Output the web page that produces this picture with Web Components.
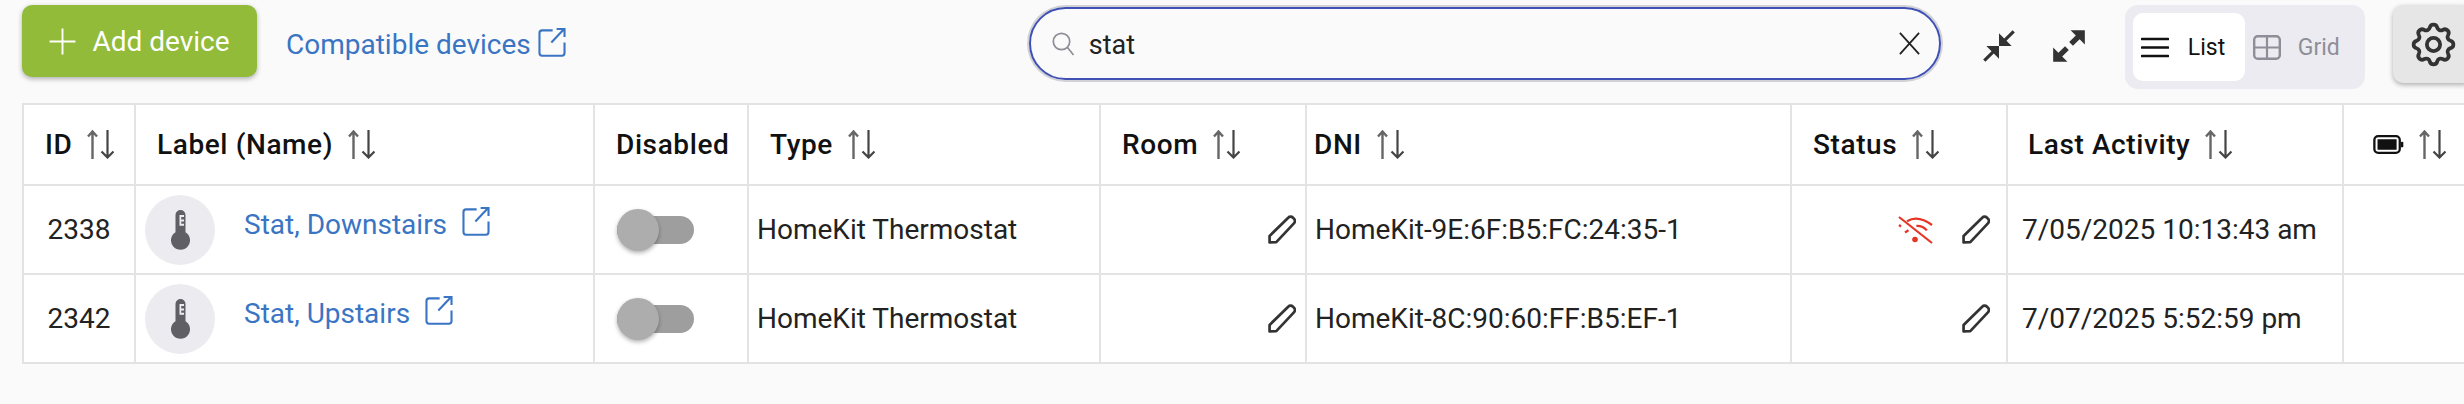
<!DOCTYPE html>
<html>
<head>
<meta charset="utf-8">
<title>Devices</title>
<style>
  html, body { margin: 0; background: #fafafa; overflow: hidden; }
  body { width: 2464px; height: 404px; font-family: Roboto, "Liberation Sans", sans-serif; color: #222; }
</style>
</head>
<body>
<device-toolbar></device-toolbar>
<device-table></device-table>

<script>
// icon paths, on a 24 box unless BOXES says otherwise
const ICONS = {
  plus: '<path d="M12 .5v23M.5 12h23" fill="none" stroke="currentColor" stroke-width="1.7"/>',
  external: '<path d="M13 2.8H5a2 2 0 0 0-2 2V20a2 2 0 0 0 2 2h15a2 2 0 0 0 2-2v-8" fill="none" stroke="currentColor" stroke-width="1.6"/><path d="M12 12 21.5 2M16 1.8h6v6" fill="none" stroke="currentColor" stroke-width="1.6"/>',
  search: '<circle cx="10.5" cy="10" r="8.2" fill="none" stroke="currentColor" stroke-width="1.7"/><path d="m16.5 16 6 7.5" fill="none" stroke="currentColor" stroke-width="1.7"/>',
  close: '<path d="M2 1l20 22M22 1 2 23" fill="none" stroke="currentColor" stroke-width="1.9"/>',
  compress: '<path d="M22 3.41l-5.29 5.29L20 12h-8V4l3.29 3.29L20.59 2 22 3.41zM3.41 22l5.29-5.29L12 20v-8H4l3.29 3.29L2 20.59 3.41 22z" fill="currentColor"/>',
  expand: '<path d="M22 2v9l-3.3-3.3-4.2 4.2-2.4-2.4 4.2-4.2L13 2zM2 22v-9l3.3 3.3 4.2-4.2 2.4 2.4-4.2 4.2L11 22z" fill="currentColor"/>',
  list: '<path d="M1 2h26M1 10.5h26M1 19h26" fill="none" stroke="currentColor" stroke-width="2.6" stroke-linecap="round"/>',
  grid: '<rect x="1.2" y="1.2" width="25.6" height="22.6" rx="3.5" fill="none" stroke="currentColor" stroke-width="2.4"/><path d="M14 1v23M1 12.5h26" fill="none" stroke="currentColor" stroke-width="2.2"/>',
  gear: '<path d="M10.325 4.317c.426-1.756 2.924-1.756 3.35 0a1.724 1.724 0 0 0 2.573 1.066c1.543-.94 3.31.826 2.37 2.37a1.724 1.724 0 0 0 1.065 2.572c1.756.426 1.756 2.924 0 3.35a1.724 1.724 0 0 0-1.066 2.573c.94 1.543-.826 3.31-2.37 2.37a1.724 1.724 0 0 0-2.572 1.065c-.426 1.756-2.924 1.756-3.35 0a1.724 1.724 0 0 0-2.573-1.066c-1.543.94-3.31-.826-2.37-2.37a1.724 1.724 0 0 0-1.065-2.572c-1.756-.426-1.756-2.924 0-3.35a1.724 1.724 0 0 0 1.066-2.573c-.94-1.543.826-3.31 2.37-2.37 1 .608 2.296.07 2.572-1.065z" fill="none" stroke="currentColor" stroke-width="1.7"/><circle cx="12" cy="12" r="3" fill="none" stroke="currentColor" stroke-width="1.7"/>',
  sort: '<path d="M5.5 29V1.5M1 6.5l4.5-5 4.5 5" fill="none" stroke="#666" stroke-width="2.4"/><path d="M20.5 0v27.5M14.5 21.5l6 6 6-6" fill="none" stroke="#444" stroke-width="2.2"/>',
  battery: '<rect x="1.2" y="2.2" width="26.6" height="17.6" rx="4" fill="none" stroke="currentColor" stroke-width="2.4"/><rect x="4.5" y="5.5" width="20" height="11" fill="currentColor"/><rect x="29" y="8" width="2.5" height="6" rx="1" fill="currentColor"/>',
  thermometer: '<path d="M4.5 5a5 5 0 0 1 10 0v17.2a9.5 9.5 0 1 1-10 0z" fill="currentColor"/><path d="M8.5 5h4.5v2h-2.8v2.4H13v2h-2.8v2.4H13v2H8.5z" fill="#ecebf0"/>',
  pencil: '<path d="M1.5 26.5v-6.3L19.5 2.6a3.2 3.2 0 0 1 4.6 0l.9.9a3.2 3.2 0 0 1 0 4.6L8 26.2z" fill="none" stroke="currentColor" stroke-width="2.6" stroke-linejoin="round"/>',
  wifiOff: '<path d="M1 1l33 26" fill="none" stroke="currentColor" stroke-width="2.2"/><path d="M9 5.2C16 1 25 2.2 34 9M18.4 9.8c4-.2 8 1.6 10.5 4.6" fill="none" stroke="currentColor" stroke-width="2.2"/><path d="M1 9l2 1.5M7 16.5l3.5-2.2" fill="none" stroke="currentColor" stroke-width="2.2"/><circle cx="17" cy="23.5" r="2.8" fill="currentColor"/>'
};
const BOXES = {
  sort: '0 0 27 29', battery: '0 0 32 22', thermometer: '0 0 19 40', pencil: '0 0 27 28', wifiOff: '0 0 35 28',
  list: '0 0 28 21', grid: '0 0 28 25', external: '2 1 21 22', search: '1 .5 23 24'
};

class AppIcon extends HTMLElement {
  connectedCallback() {
    const name = this.getAttribute('name');
    this.attachShadow({ mode: 'open' });
    this.shadowRoot.innerHTML = `
      <style>
        :host { display: inline-flex; flex: none; }
        svg { display: block; width: 100%; height: 100%; }
      </style>
      <svg viewBox="${BOXES[name] || '0 0 24 24'}">${ICONS[name]}</svg>
    `;
  }
}
customElements.define('app-icon', AppIcon);

class SearchBox extends HTMLElement {
  connectedCallback() {
    this.attachShadow({ mode: 'open' });
    this.shadowRoot.innerHTML = `
      <style>
        :host {
          display: flex;
          align-items: center;
          box-sizing: border-box;
          width: 912px;
          height: 73px;
          padding: 0 18px 0 21px;
          border: 2px solid #3f51b5;
          border-radius: 37px;
          box-shadow: 0 0 0 2px #d2d2d6;
          font-size: 27px;
          color: #222;
        }
        .glass { width: 23px; height: 24px; color: #8e8e98; margin-right: 14px; }
        span { flex: 1; margin-top: 2px; }
        .clear { width: 23px; height: 23px; color: #222; }
      </style>
      <app-icon class="glass" name="search"></app-icon>
      <span>stat</span>
      <app-icon class="clear" name="close"></app-icon>
    `;
  }
}
customElements.define('search-box', SearchBox);

class ViewToggle extends HTMLElement {
  connectedCallback() {
    this.attachShadow({ mode: 'open' });
    this.shadowRoot.innerHTML = `
      <style>
        :host {
          display: flex;
          align-items: stretch;
          box-sizing: border-box;
          width: 240px;
          height: 84px;
          padding: 8px;
          border-radius: 13px;
          background: #ecebf1;
          font-size: 23px;
        }
        .opt { display: flex; align-items: center; gap: 19px; padding: 0 8px; border-radius: 10px; box-sizing: border-box; }
        .on { width: 112px; background: #fff; color: #111; }
        .off { color: #8e8e98; gap: 17px; }
        .on app-icon { width: 28px; height: 21px; }
        .off app-icon { width: 28px; height: 25px; }
      </style>
      <div class="opt on"><app-icon name="list"></app-icon>List</div>
      <div class="opt off"><app-icon name="grid"></app-icon>Grid</div>
    `;
  }
}
customElements.define('view-toggle', ViewToggle);

class DeviceToolbar extends HTMLElement {
  connectedCallback() {
    this.attachShadow({ mode: 'open' });
    this.shadowRoot.innerHTML = `
      <style>
        :host {
          display: flex;
          align-items: flex-start;
          box-sizing: border-box;
          height: 103px;
          padding: 5px 0 0 22px;
          width: 2520px;
        }
        .add {
          display: flex;
          align-items: center;
          justify-content: center;
          gap: 16px;
          width: 235px;
          height: 72px;
          border-radius: 10px;
          background: #91bb38;
          color: #fff;
          font-size: 28px;
          box-shadow: 0 2px 5px rgba(0,0,0,0.3);
        }
        .add app-icon { width: 27px; height: 27px; }
        .compat {
          display: flex;
          align-items: flex-start;
          gap: 7px;
          margin: 23px 0 0 29px;
          color: #3a75c4;
          font-size: 28px;
        }
        .compat app-icon { width: 28px; height: 29px; margin-top: 0; }
        search-box { margin: 2px 0 0 463px; }
        .zoom { display: flex; gap: 32px; margin: 22px 0 0 39px; color: #333; }
        .zoom app-icon { width: 38px; height: 38px; }
        view-toggle { margin-left: 37px; }
        .settings {
          display: flex;
          align-items: center;
          box-sizing: border-box;
          width: 80px;
          height: 78px;
          margin-left: 28px;
          padding-left: 14px;
          border-radius: 10px;
          background: #e6e6e6;
          box-shadow: 0 2px 5px rgba(0,0,0,0.3);
          color: #333;
        }
        .settings app-icon { width: 53px; height: 53px; flex: none; }
      </style>
      <div class="add"><app-icon name="plus"></app-icon>Add device</div>
      <div class="compat">Compatible devices<app-icon name="external"></app-icon></div>
      <search-box></search-box>
      <div class="zoom"><app-icon name="compress"></app-icon><app-icon name="expand"></app-icon></div>
      <view-toggle></view-toggle>
      <div class="settings"><app-icon name="gear"></app-icon></div>
    `;
  }
}
customElements.define('device-toolbar', DeviceToolbar);

const DEVICES = [
  { id: 2338, name: 'Stat, Downstairs', dni: 'HomeKit-9E:6F:B5:FC:24:35-1', offline: true, last: '7/05/2025 10:13:43 am' },
  { id: 2342, name: 'Stat, Upstairs', dni: 'HomeKit-8C:90:60:FF:B5:EF-1', offline: false, last: '7/07/2025 5:52:59 pm' }
];

class DeviceTable extends HTMLElement {
  connectedCallback() {
    const sort = '<app-icon class="sort" name="sort"></app-icon>';
    const rows = DEVICES.map(d => `
      <tr>
        <td class="id">${d.id}</td>
        <td>
          <div class="label">
            <div class="avatar"><app-icon name="thermometer"></app-icon></div>
            <a>${d.name}</a>
            <app-icon class="ext" name="external"></app-icon>
          </div>
        </td>
        <td><div class="switch"><i></i></div></td>
        <td>HomeKit Thermostat</td>
        <td><div class="edit"><app-icon class="pen" name="pencil"></app-icon></div></td>
        <td class="dni">${d.dni}</td>
        <td>
          <div class="edit status">
            ${d.offline ? '<app-icon class="wifi" name="wifiOff"></app-icon>' : ''}
            <app-icon class="pen" name="pencil"></app-icon>
          </div>
        </td>
        <td class="last">${d.last}</td>
        <td></td>
      </tr>`).join('');
    this.attachShadow({ mode: 'open' });
    this.shadowRoot.innerHTML = `
      <style>
        :host { display: block; margin-left: 22px; width: 2442px; overflow: hidden; }
        table { border-collapse: collapse; table-layout: fixed; width: 2520px; background: #fff; font-size: 28px; color: #222; }
        th, td { border: 2px solid #e3e3e3; padding: 0 8px; white-space: nowrap; }
        th { height: 79px; font-weight: 500; text-align: left; color: #111; padding-left: 21px; letter-spacing: 0.6px; }
        th > div { display: flex; align-items: center; gap: 15px; }
        td { height: 87px; }
        .sort { width: 27px; height: 29px; }
        .id { text-align: center; }
        .dni { padding-left: 8px; }
        .last { padding-left: 14px; }
        .label { display: flex; align-items: center; }
        .avatar {
          display: flex; align-items: center; justify-content: center;
          width: 70px; height: 70px; border-radius: 50%; background: #ecebf0; color: #605f66;
          margin-left: 1px; margin-right: 29px;
        }
        .avatar app-icon { width: 19px; height: 40px; }
        .label a { color: #3a75c4; margin-top: -11px; }
        .ext { width: 28px; height: 29px; margin: -16px 0 0 15px; color: #3a75c4; }
        .switch { position: relative; width: 77px; height: 28px; margin-left: 14px; border-radius: 14px; background: #9e9e9e; }
        .switch i {
          position: absolute; left: 0; top: -7px; width: 42px; height: 42px; border-radius: 50%;
          background: #adadad; box-shadow: 0 2px 4px rgba(0,0,0,0.3);
        }
        .edit { display: flex; justify-content: flex-end; align-items: center; gap: 29px; margin-right: 1px; }
        .status { padding-right: 7px; }
        .pen { width: 28px; height: 29px; color: #333; }
        .wifi { width: 35px; height: 28px; color: #e53525; }
        .battery { width: 31px; height: 21px; color: #111; }
      </style>
      <table>
        <colgroup>
          <col style="width:112px"><col style="width:459px"><col style="width:154px"><col style="width:352px">
          <col style="width:206px"><col style="width:485px"><col style="width:216px"><col style="width:336px"><col style="width:200px">
        </colgroup>
        <thead>
          <tr>
            <th><div>ID${sort}</div></th>
            <th><div>Label (Name)${sort}</div></th>
            <th><div>Disabled</div></th>
            <th><div>Type${sort}</div></th>
            <th><div>Room${sort}</div></th>
            <th style="padding-left:7px"><div>DNI${sort}</div></th>
            <th><div>Status${sort}</div></th>
            <th style="padding-left:20px"><div>Last Activity${sort}</div></th>
            <th style="padding-left:29px"><div><app-icon class="battery" name="battery"></app-icon>${sort}</div></th>
          </tr>
        </thead>
        <tbody>${rows}</tbody>
      </table>
    `;
  }
}
customElements.define('device-table', DeviceTable);
</script>
</body>
</html>
